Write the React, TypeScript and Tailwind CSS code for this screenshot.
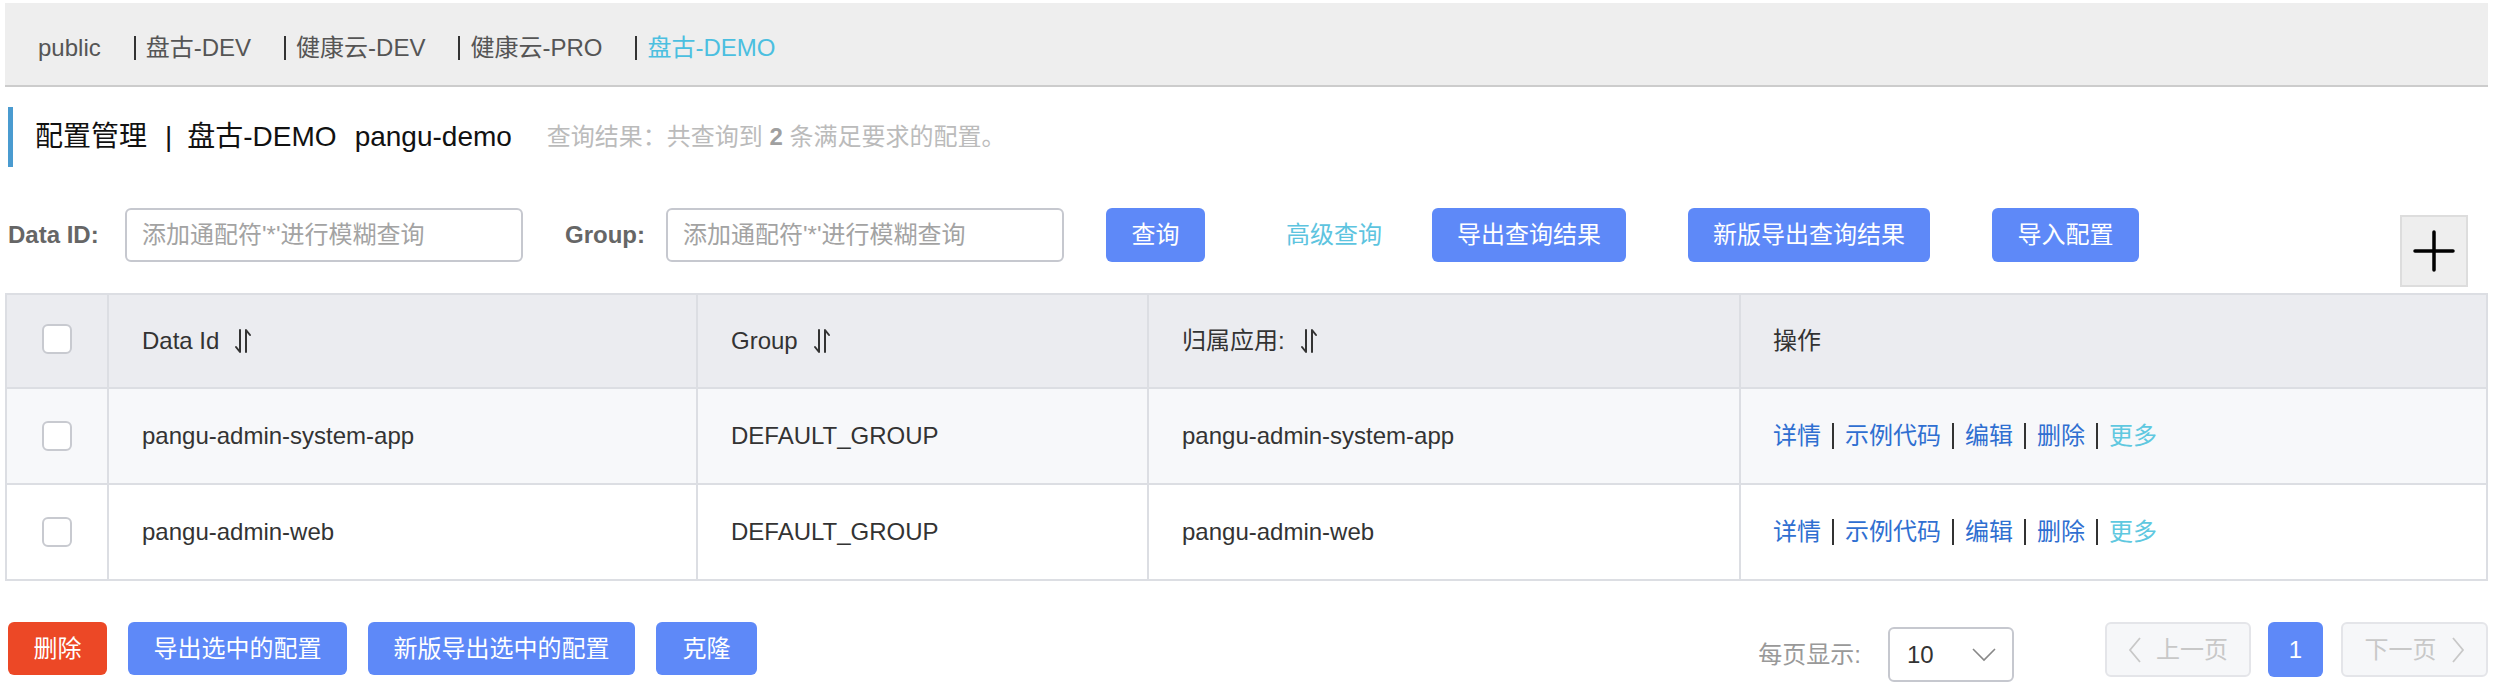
import React from "react";

function SortIcon() {
  return (
    <svg width="18" height="28" viewBox="0 0 18 28" className="ml-[15px]" fill="none">
      <path d="M6 3 V25 L2 20" stroke="#333" strokeWidth="2" strokeLinecap="round" strokeLinejoin="round" />
      <path d="M12 25 V3 L16 8" stroke="#333" strokeWidth="2" strokeLinecap="round" strokeLinejoin="round" />
    </svg>
  );
}

function Tab({ label, active }: { label: string; active?: boolean }) {
  return (
    <div className="flex items-center ml-[33px]">
      <span className="w-[2px] h-[24px] bg-[#333333]" />
      <span className={active ? "ml-[10px] text-[#4bbfe0]" : "ml-[10px]"}>{label}</span>
    </div>
  );
}

function Checkbox() {
  return <div className="w-[30px] h-[30px] rounded-[6px] border-2 border-[#c8cad0] bg-white" />;
}

function Actions() {
  const Sep = () => <span className="mx-[11px] w-[2px] h-[26px] bg-[#333333]" />;
  return (
    <div className="flex items-center text-[24px] text-[#2f6fd1]">
      <span>详情</span>
      <Sep />
      <span>示例代码</span>
      <Sep />
      <span>编辑</span>
      <Sep />
      <span>删除</span>
      <Sep />
      <span className="text-[#5fc8e0]">更多</span>
    </div>
  );
}

function Row({ id, bg, last }: { id: string; bg: string; last?: boolean }) {
  return (
    <div
      className={
        (last ? "h-[94px] " : "h-[96px] border-b-2 border-[#dcdee3] ") +
        "flex text-[24px] text-[#333333] " +
        bg
      }
    >
      <div className="w-[102px] border-r-2 border-[#dcdee3] flex items-center justify-center">
        <Checkbox />
      </div>
      <div className="w-[589px] border-r-2 border-[#dcdee3] flex items-center pl-[33px]">{id}</div>
      <div className="w-[451px] border-r-2 border-[#dcdee3] flex items-center pl-[33px]">DEFAULT_GROUP</div>
      <div className="w-[592px] border-r-2 border-[#dcdee3] flex items-center pl-[33px]">{id}</div>
      <div className="flex-1 flex items-center pl-[32px]">
        <Actions />
      </div>
    </div>
  );
}

export default function App() {
  return (
    <div className="w-[2508px] h-[692px] bg-white overflow-hidden font-['Liberation_Sans','Noto_Sans_CJK_SC',sans-serif] leading-none">
      {/* top namespace bar */}
      <div className="ml-[5px] mt-[3px] w-[2483px] h-[84px] bg-[#eeeeee] border-b-2 border-[#cccccc] flex items-center pl-[33px] pt-[8px] text-[24px] text-[#555555]">
        <span>public</span>
        <Tab label="盘古-DEV" />
        <Tab label="健康云-DEV" />
        <Tab label="健康云-PRO" />
        <Tab label="盘古-DEMO" active />
      </div>

      {/* title */}
      <div className="mt-[20px] ml-[8px] flex items-center h-[60px]">
        <div className="w-[5px] h-[60px] bg-[#4a9bd0]" />
        <div className="ml-[22px] text-[28px] text-[#111111] flex items-center">
          <span>配置管理</span>
          <span className="ml-[18px] mr-[15px]">|</span>
          <span>盘古-DEMO</span>
          <span className="ml-[18px]">pangu-demo</span>
        </div>
        <div className="ml-[35px] text-[24px] text-[#bbbbbb]">
          查询结果：共查询到 <b className="text-[#a0a0a0]">2</b> 条满足要求的配置。
        </div>
      </div>

      {/* search row */}
      <div className="mt-[41px] pl-[8px] flex items-start text-[24px]">
        <div className="w-[117px] h-[54px] flex items-center font-bold text-[#666666]">Data ID:</div>
        <input
          className="w-[398px] h-[54px] rounded-[6px] border-2 border-[#c6c8cf] pl-[15px] text-[24px] outline-none placeholder:text-[#a3a3a3]"
          placeholder="添加通配符'*'进行模糊查询"
        />
        <div className="ml-[42px] w-[101px] h-[54px] flex items-center font-bold text-[#666666]">Group:</div>
        <input
          className="w-[398px] h-[54px] rounded-[6px] border-2 border-[#c6c8cf] pl-[15px] text-[24px] outline-none placeholder:text-[#a3a3a3]"
          placeholder="添加通配符'*'进行模糊查询"
        />
        <button className="ml-[42px] w-[99px] h-[54px] rounded-[6px] bg-[#5e89f8] text-white">查询</button>
        <div className="ml-[81px] w-[96px] h-[54px] flex items-center text-[#5dc4df]">高级查询</div>
        <button className="ml-[50px] w-[194px] h-[54px] rounded-[6px] bg-[#5e89f8] text-white">导出查询结果</button>
        <button className="ml-[62px] w-[242px] h-[54px] rounded-[6px] bg-[#5e89f8] text-white">新版导出查询结果</button>
        <button className="ml-[62px] w-[147px] h-[54px] rounded-[6px] bg-[#5e89f8] text-white">导入配置</button>
        <div className="ml-[261px] mt-[7px] w-[68px] h-[72px] border-2 border-[#dddddd] bg-[#eeeeee] flex items-center justify-center">
          <svg width="42" height="42" viewBox="0 0 42 42">
            <path d="M21 2 V40 M2 21 H40" stroke="#000" strokeWidth="3.5" strokeLinecap="round" />
          </svg>
        </div>
      </div>

      {/* table */}
      <div className="mt-[6px] ml-[5px] w-[2483px] border-2 border-[#dcdee3]">
        <div className="h-[94px] border-b-2 border-[#dcdee3] bg-[#ebecf0] flex text-[24px] text-[#333333]">
          <div className="w-[102px] border-r-2 border-[#dcdee3] flex items-center justify-center pb-[4px]">
            <Checkbox />
          </div>
          <div className="w-[589px] border-r-2 border-[#dcdee3] flex items-center pl-[33px]">
            Data Id
            <SortIcon />
          </div>
          <div className="w-[451px] border-r-2 border-[#dcdee3] flex items-center pl-[33px]">
            Group
            <SortIcon />
          </div>
          <div className="w-[592px] border-r-2 border-[#dcdee3] flex items-center pl-[33px]">
            归属应用:
            <SortIcon />
          </div>
          <div className="flex-1 flex items-center pl-[32px]">操作</div>
        </div>
        <Row id="pangu-admin-system-app" bg="bg-[#f7f8fa]" />
        <Row id="pangu-admin-web" bg="bg-white" last />
      </div>

      {/* footer */}
      <div className="mt-[41px] ml-[8px] w-[2480px] flex items-start justify-between text-[24px]">
        <div className="flex items-start">
          <button className="w-[99px] h-[53px] rounded-[6px] bg-[#ec4826] text-white">删除</button>
          <button className="ml-[21px] w-[219px] h-[53px] rounded-[6px] bg-[#5e89f8] text-white">导出选中的配置</button>
          <button className="ml-[21px] w-[267px] h-[53px] rounded-[6px] bg-[#5e89f8] text-white">新版导出选中的配置</button>
          <button className="ml-[21px] w-[101px] h-[53px] rounded-[6px] bg-[#5e89f8] text-white">克隆</button>
        </div>
        <div className="flex items-start">
          <div className="h-[55px] mt-[5px] flex items-center text-[#999999]">每页显示:</div>
          <div className="ml-[27px] mt-[5px] w-[126px] h-[55px] rounded-[6px] border-2 border-[#c6c8cf] flex items-center pl-[17px] pr-[16px] justify-between text-[#333333]">
            <span>10</span>
            <svg width="24" height="14" viewBox="0 0 24 14" fill="none">
              <path d="M1 1 L12 12 L23 1" stroke="#888" strokeWidth="1.6" />
            </svg>
          </div>
          <div className="ml-[91px] w-[146px] h-[55px] rounded-[6px] border-2 border-[#e4e5e9] bg-[#f6f7f9] flex items-center justify-center text-[#c8c8c8]">
            <svg width="14" height="26" viewBox="0 0 14 26" fill="none">
              <path d="M12 1 L2 13 L12 25" stroke="#c8c8c8" strokeWidth="1.8" />
            </svg>
            <span className="ml-[14px]">上一页</span>
          </div>
          <div className="ml-[17px] w-[55px] h-[55px] rounded-[6px] bg-[#5e89f8] text-white flex items-center justify-center">1</div>
          <div className="ml-[18px] w-[147px] h-[55px] rounded-[6px] border-2 border-[#e4e5e9] bg-[#f6f7f9] flex items-center justify-center text-[#c8c8c8]">
            <span className="mr-[14px]">下一页</span>
            <svg width="14" height="26" viewBox="0 0 14 26" fill="none">
              <path d="M2 1 L12 13 L2 25" stroke="#c8c8c8" strokeWidth="1.8" />
            </svg>
          </div>
        </div>
      </div>
    </div>
  );
}
